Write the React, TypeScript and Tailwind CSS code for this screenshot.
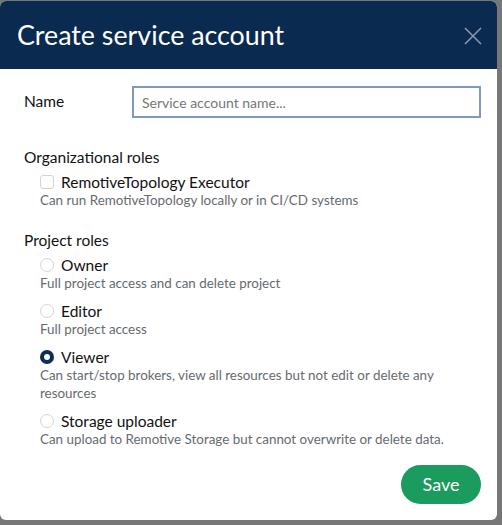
import React from "react";

const font = { fontFamily: "Lato, 'Open Sans', sans-serif" };

function Radio({ checked }: { checked?: boolean }) {
  return checked ? (
    <span className="inline-flex h-[14px] w-[14px] shrink-0 items-center justify-center rounded-full bg-[#0d2d55]">
      <span className="h-[6px] w-[6px] rounded-full bg-white" />
    </span>
  ) : (
    <span className="inline-block h-[14px] w-[14px] shrink-0 rounded-full border border-[#d4d4d4] bg-white" />
  );
}

function Option({
  title,
  desc,
  control,
  className = "",
}: {
  title: string;
  desc: React.ReactNode;
  control: React.ReactNode;
  className?: string;
}) {
  return (
    <div className={"pl-4 " + className}>
      <div className="flex h-[18px] items-center gap-[7px]">
        {control}
        <span className="text-[15.5px] leading-[18px] text-[#111]">{title}</span>
      </div>
      <div className="text-[13.4px] leading-[18px] text-[#666a70]">{desc}</div>
    </div>
  );
}

export default function App() {
  return (
    <div className="h-[525px] w-[502px] overflow-hidden bg-[#777777] pt-px" style={font}>
      <div className="flex h-[519px] w-[497px] flex-col overflow-hidden rounded-[6px] bg-white">
        <div className="flex h-[68px] shrink-0 items-center justify-between bg-[#0b2a50] pl-[17px] pr-[15px]">
          <span className="text-[26.8px] leading-none text-white">Create service account</span>
          <svg width="18" height="18" viewBox="0 0 18 18" className="mt-[2px]">
            <path d="M1 1 L17 17 M17 1 L1 17" stroke="#8898ad" strokeWidth="1.6" fill="none" />
          </svg>
        </div>
        <div className="flex flex-1 flex-col pl-6 pr-4 pt-[17px]">
          <div className="flex h-[32px] items-center">
            <span className="w-[108px] text-[15.5px] text-[#111]">Name</span>
            <input
              className="h-[32px] flex-1 border-2 border-[#7d9bbf] px-[8px] text-[14px] text-[#111] outline-none placeholder:text-[#777]"
              placeholder="Service account name..."
              style={font}
            />
          </div>
          <div className="mt-[29px] text-[15.5px] leading-[20px] text-[#111]">Organizational roles</div>
          <Option
            className="mt-[6px]"
            title="RemotiveTopology Executor"
            desc="Can run RemotiveTopology locally or in CI/CD systems"
            control={<span className="inline-block h-[14px] w-[14px] shrink-0 rounded-[3px] border border-[#d4d4d4] bg-white" />}
          />
          <div className="mt-[21px] text-[15.5px] leading-[20px] text-[#111]">Project roles</div>
          <Option
            className="mt-[6px]"
            title="Owner"
            desc="Full project access and can delete project"
            control={<Radio />}
          />
          <Option className="mt-[10px]" title="Editor" desc="Full project access" control={<Radio />} />
          <Option
            className="mt-[10px]"
            title="Viewer"
            desc={
              <>
                Can start/stop brokers, view all resources but not edit or delete any
                <br />
                resources
              </>
            }
            control={<Radio checked />}
          />
          <Option
            className="mt-[10px]"
            title="Storage uploader"
            desc="Can upload to Remotive Storage but cannot overwrite or delete data."
            control={<Radio />}
          />
          <div className="mt-[17px] flex justify-end">
            <button className="h-[39px] w-[80px] rounded-full bg-[#1b9b5d] text-[18px] text-white" style={font}>
              Save
            </button>
          </div>
        </div>
      </div>
    </div>
  );
}
